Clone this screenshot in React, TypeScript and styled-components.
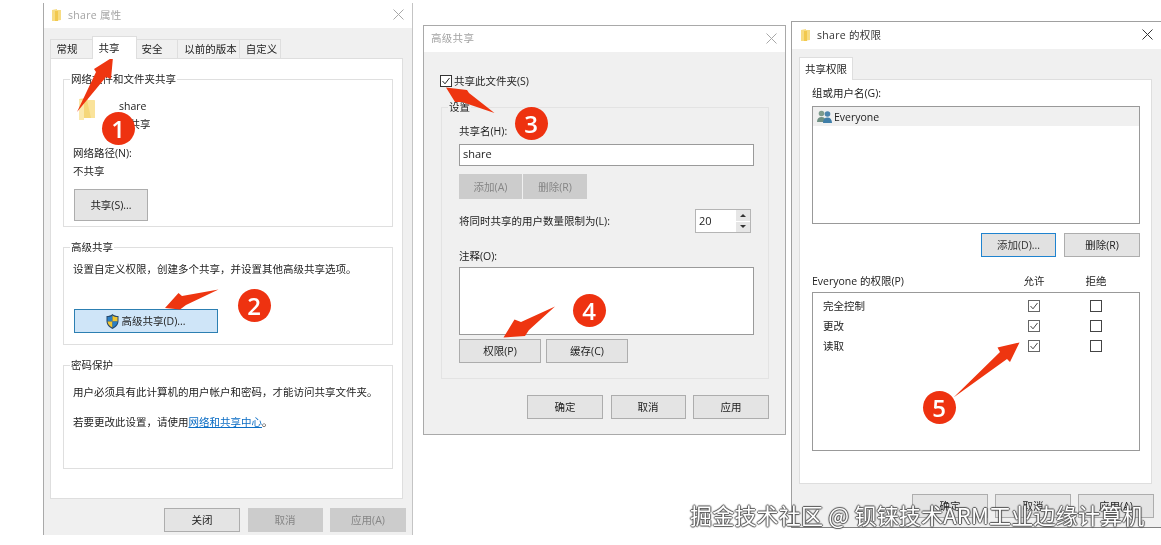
import React from "react";
import styled, { createGlobalStyle } from "styled-components";

const GlobalStyle = createGlobalStyle`
  html, body { margin: 0; padding: 0; background: #fff; overflow: hidden; }
  * { box-sizing: border-box; }
`;

const Desktop = styled.div`
  position: relative;
  width: 1161px;
  height: 545px;
  overflow: hidden;
  background: #fff;
  font-family: "Open Sans", "Noto Sans CJK SC", sans-serif;
  font-size: 10.5px;
  line-height: 18px;
  color: #222;
  filter: blur(0.3px);
`;

const Window = styled.div<{ $x: number; $y: number; $w: number; $h: number; $frame: string }>`
  position: absolute;
  left: ${(p) => p.$x}px;
  top: ${(p) => p.$y}px;
  width: ${(p) => p.$w}px;
  height: ${(p) => p.$h}px;
  display: flex;
  flex-direction: column;
  background: #f0f0f0;
  ${(p) => p.$frame}
`;

const TitleBar = styled.div<{ $h: number; $pad: number; $dim?: boolean }>`
  height: ${(p) => p.$h}px;
  flex: none;
  display: flex;
  align-items: center;
  gap: 7px;
  padding: 0 8px 2px ${(p) => p.$pad}px;
  background: #fff;
  color: ${(p) => (p.$dim ? "#a3a3a3" : "#333")};
  letter-spacing: 0.3px;
`;

const TitleText = styled.span`
  flex: 1;
`;

const Body = styled.div<{ $pad: string }>`
  flex: 1;
  display: flex;
  flex-direction: column;
  padding: ${(p) => p.$pad};
`;

const Tabs = styled.div`
  display: flex;
  align-items: flex-end;
  height: 23px;
  flex: none;
`;

const Tab = styled.div<{ $w: number; $active?: boolean; $pl?: number; $pr?: number }>`
  width: ${(p) => p.$w}px;
  height: ${(p) => (p.$active ? 23 : 20)}px;
  display: flex;
  align-items: center;
  justify-content: center;
  padding: 0 ${(p) => p.$pr ?? 0}px 0 ${(p) => p.$pl ?? 0}px;
  background: ${(p) => (p.$active ? "#fff" : "#f0f0f0")};
  border: 1px solid #dedede;
  border-bottom: ${(p) => (p.$active ? "none" : "1px solid #dedede")};
  position: relative;
  z-index: ${(p) => (p.$active ? 1 : 0)};
  margin-left: -1px;
  white-space: nowrap;
  &:first-child { margin-left: 0; }
`;

const Panel = styled.div<{ $pad: string; $mr: number; $h: number; $gap?: number }>`
  height: ${(p) => p.$h}px;
  flex: none;
  margin-top: -1px;
  margin-right: ${(p) => p.$mr}px;
  padding: ${(p) => p.$pad};
  background: #fff;
  border: 1px solid #dedede;
  display: flex;
  flex-direction: column;
  gap: ${(p) => p.$gap ?? 0}px;
`;

const Group = styled.div<{ $h: number; $pad: string; $tone?: string; $ml?: number }>`
  position: relative;
  height: ${(p) => p.$h}px;
  flex: none;
  margin-left: ${(p) => p.$ml ?? 0}px;
  padding: ${(p) => p.$pad};
  border: 1px solid ${(p) => p.$tone ?? "#dfdfdf"};
`;

const Legend = styled.span<{ $bg?: string }>`
  position: absolute;
  top: -10px;
  left: 6px;
  padding: 0 1px;
  background: ${(p) => p.$bg ?? "#fff"};
`;

const FileRow = styled.div`
  display: flex;
  height: 36px;
  gap: 23px;
  padding-left: 5px;
`;

const Lines = styled.div`
  display: flex;
  flex-direction: column;
`;

const Line = styled.div<{ $mt?: number }>`
  height: 18px;
  flex: none;
  margin-top: ${(p) => p.$mt ?? 0}px;
  white-space: nowrap;
`;

const Link = styled.span`
  color: #0a6cc4;
  text-decoration: underline;
`;

const Button = styled.div<{ $w: number; $h?: number; $mt?: number; $ml?: number; $kind?: "normal" | "disabled" | "focus" | "hot" }>`
  width: ${(p) => p.$w}px;
  height: ${(p) => p.$h ?? 24}px;
  flex: none;
  margin-top: ${(p) => p.$mt ?? 0}px;
  margin-left: ${(p) => p.$ml ?? 0}px;
  display: flex;
  align-items: center;
  justify-content: center;
  gap: 2px;
  white-space: nowrap;
  ${(p) => {
    switch (p.$kind) {
      case "disabled":
        return "background:#cccccc;color:#858585;border:1px solid #cccccc;";
      case "focus":
        return "background:#e1e1e1;color:#333;border:1.5px solid #1f83cf;";
      case "hot":
        return "background:#cfe5f8;color:#222;border:1px solid #2c7fb2;";
      default:
        return "background:#e4e4e4;color:#222;border:1px solid #adadad;";
    }
  }}
`;

const ButtonRow = styled.div<{ $gap: number; $mt: number; $end?: boolean; $w?: number }>`
  display: flex;
  flex: none;
  gap: ${(p) => p.$gap}px;
  margin-top: ${(p) => p.$mt}px;
  justify-content: ${(p) => (p.$end ? "flex-end" : "flex-start")};
  width: ${(p) => (p.$w ? `${p.$w}px` : "auto")};
`;

const CheckRow = styled.div`
  display: flex;
  align-items: center;
  height: 18px;
  flex: none;
  gap: 2px;
  margin-bottom: 17px;
`;

const Field = styled.div<{ $w: number; $h: number; $mt: number }>`
  width: ${(p) => p.$w}px;
  height: ${(p) => p.$h}px;
  flex: none;
  margin-top: ${(p) => p.$mt}px;
  padding: 0 0 2px 3px;
  background: #fff;
  border: 1px solid #9a9a9a;
  display: flex;
  align-items: center;
  font-size: 11px;
`;

const LimitRow = styled.div`
  display: flex;
  align-items: center;
  justify-content: space-between;
  width: 292px;
  height: 24px;
  margin-top: 10px;
`;

const Spinner = styled.div`
  width: 56px;
  height: 24px;
  display: flex;
  background: #fff;
  border: 1px solid #b5b5b5;
`;

const SpinValue = styled.div`
  flex: 1;
  display: flex;
  align-items: center;
  padding-left: 3px;
  font-size: 11px;
`;

const SpinButtons = styled.div`
  width: 14px;
  display: flex;
  flex-direction: column;
  gap: 1px;
`;

const SpinStep = styled.div<{ $up?: boolean }>`
  flex: 1;
  display: flex;
  align-items: center;
  justify-content: center;
  background: #e6e6e6;
  &::after {
    content: "";
    border-left: 3px solid transparent;
    border-right: 3px solid transparent;
    ${(p) => (p.$up ? "border-bottom: 3px solid #333;" : "border-top: 3px solid #333;")}
  }
`;

const ListBox = styled.div<{ $h: number; $mt: number; $pad?: string }>`
  width: 328px;
  height: ${(p) => p.$h}px;
  flex: none;
  margin-top: ${(p) => p.$mt}px;
  padding: ${(p) => p.$pad ?? "0"};
  background: #fff;
  border: 1px solid #999;
`;

const UserRow = styled.div`
  height: 19px;
  display: flex;
  align-items: center;
  gap: 2px;
  padding-left: 4px;
  background: #f0f0f0;
`;

const PermGrid = styled.div<{ $pad: string; $h: number; $mt?: number; $w?: number }>`
  display: grid;
  grid-template-columns: 1fr 62px 62px;
  align-items: center;
  justify-items: start;
  height: ${(p) => p.$h}px;
  margin-top: ${(p) => p.$mt ?? 0}px;
  padding: ${(p) => p.$pad};
  width: ${(p) => (p.$w ? `${p.$w}px` : "100%")};
  flex: none;
`;

const PermHead = styled.span`
  justify-self: center;
  display: flex;
`;

const Watermark = styled.div`
  position: absolute;
  left: 690px;
  top: 499px;
  font-family: "Noto Sans CJK SC", sans-serif;
  font-size: 22px;
  line-height: 30px;
  letter-spacing: 0.2px;
  white-space: nowrap;
  color: #fff;
  text-shadow: 1px 0 1px #555, -1px 0 1px #555, 0 1px 1px #555, 0 -1px 1px #555;
`;

const Badge = styled.div<{ $cx: number; $cy: number }>`
  position: absolute;
  left: ${(p) => p.$cx - 16.5}px;
  top: ${(p) => p.$cy - 16.5}px;
  width: 33px;
  height: 33px;
  border-radius: 50%;
  background: #ee3210;
  color: #fff;
  font-family: "Open Sans", sans-serif;
  font-size: 24px;
  font-weight: 600;
  line-height: 33px;
  text-align: center;
`;

const Overlay = styled.svg`
  position: absolute;
  left: 0;
  top: 0;
  width: 1161px;
  height: 545px;
  pointer-events: none;
`;

const CloseX = ({ c }: { c: string }) => (
  <svg width="11" height="11" viewBox="0 0 11 11">
    <path d="M.5.5l10 10M10.5.5l-10 10" stroke={c} strokeWidth="1" fill="none" />
  </svg>
);

const FolderSmall = () => (
  <svg width="9" height="12" viewBox="0 0 9 12">
    <path d="M0 1l5-1v1h4v10l-6 1H0z" fill="#f7dc83" />
    <path d="M3 2h3v10l-3 0z" fill="#f2c94e" />
  </svg>
);

const FolderBig = () => (
  <svg width="18" height="24" viewBox="0 0 18 24">
    <path d="M1 2l8-1 1 2h6l1 1v17H5L1 23z" fill="#f5d779" />
    <path d="M1 2l5 2v19H1z" fill="#fbe9ad" />
    <path d="M9 3h7l1 1v17h-4z" fill="#fae39a" />
  </svg>
);

const Shield = () => (
  <svg width="13" height="15" viewBox="0 0 13 15">
    <path d="M6.5 0C5 1.4 2.8 2 .5 2v5c0 3.7 2.5 6.4 6 8 3.5-1.6 6-4.300 6-8V2C10.200 2 8 1.400 6.500 0z" fill="#27486b" />
    <path d="M6.500 1.400V7.500H1.500V3c2 0 3.700-.5 5-1.600z" fill="#2b7fc4" />
    <path d="M6.500 1.400c1.300 1.100 3 1.600 5 1.600v4.500h-5z" fill="#f1c52f" />
    <path d="M1.500 7.500h5v6C3.700 12.200 1.700 10.200 1.500 7.500z" fill="#f1c52f" />
    <path d="M6.500 7.500h5c-.2 2.700-2.200 4.700-5 6z" fill="#2b7fc4" />
  </svg>
);

const People = () => (
  <svg width="15" height="14" viewBox="0 0 15 14">
    <circle cx="4.500" cy="3.500" r="2.800" fill="#7f9c8e" />
    <path d="M0 12c0-3.500 1.800-5 4.500-5S9 8.500 9 12z" fill="#6f9083" />
    <circle cx="10.500" cy="4" r="2.800" fill="#4d85ad" />
    <path d="M6 13c0-3.500 1.800-5.500 4.500-5.500S15 9.500 15 13z" fill="#3f7ea8" />
  </svg>
);

const Check = ({ c, s }: { c: string; s: string }) => (
  <svg width="12" height="12" viewBox="0 0 12 12">
    <rect x=".5" y=".5" width="11" height="11" fill="#fff" stroke={s} />
    <path d="M2.500 6l2.500 2.800 4.500-5.800" stroke={c} strokeWidth="1" fill="none" />
  </svg>
);

const Empty = () => (
  <svg width="12" height="12" viewBox="0 0 12 12">
    <rect x=".5" y=".5" width="11" height="11" fill="#fff" stroke="#444" />
  </svg>
);

const perms = ["完全控制", "更改", "读取"];

const arrows = [
  "77,112 96,72 94,69 113,57 111,79 106,77",
  "218.500,289.500 182,296 178.500,293 165,308 180,309.500 186,305",
  "446,87.500 467,90 469,93 494.500,113 462,102 455,102",
  "555,306.500 521,322 514.500,319.500 503.500,337.500 525,336 529,330",
  "953.500,397.500 1000,352 997.500,347.500 1019.500,342.500 1010,362 1007,359",
];

const badges: [number, number, string][] = [
  [118, 128, "1"],
  [254, 305, "2"],
  [531, 123, "3"],
  [589, 310, "4"],
  [939, 407, "5"],
];

export default function App() {
  return (
    <Desktop>
      <GlobalStyle />

      <Window $x={43} $y={3} $w={370} $h={532} $frame="border-left:1px solid #a9a9a9;border-right:1px solid #c4c4c4;">
        <TitleBar $h={25} $pad={8} $dim>
          <FolderSmall />
          <TitleText>share 属性</TitleText>
          <CloseX c="#a8a8a8" />
        </TitleBar>
        <Body $pad="8px 6px 0 6px">
          <Tabs>
            <Tab $w={43} $pr={9}>常规</Tab>
            <Tab $w={45} $pr={11} $active>共享</Tab>
            <Tab $w={42} $pr={10}>安全</Tab>
            <Tab $w={63} $pl={4}>以前的版本</Tab>
            <Tab $w={42} $pl={3}>自定义</Tab>
          </Tabs>
          <Panel $pad="20px 9px 0 12px" $mr={3} $h={441} $gap={20}>
            <Group $h={148} $pad="17px 0 0 9px">
              <Legend>网络文件和文件夹共享</Legend>
              <FileRow>
                <FolderBig />
                <Lines>
                  <Line>share</Line>
                  <Line>不共享</Line>
                </Lines>
              </FileRow>
              <Line $mt={11}>网络路径(N):</Line>
              <Line>不共享</Line>
              <Button $w={74} $h={32} $mt={9} $ml={1}>共享(S)...</Button>
            </Group>
            <Group $h={98} $pad="12px 0 0 9px">
              <Legend>高级共享</Legend>
              <Line>设置自定义权限，创建多个共享，并设置其他高级共享选项。</Line>
              <Button $w={144} $h={24} $mt={31} $ml={1} $kind="hot">
                <Shield />
                高级共享(D)...
              </Button>
            </Group>
            <Group $h={104} $pad="17px 0 0 9px">
              <Legend>密码保护</Legend>
              <Line>用户必须具有此计算机的用户帐户和密码，才能访问共享文件夹。</Line>
              <Line $mt={12}>
                若要更改此设置，请使用<Link>网络和共享中心</Link>。
              </Line>
            </Group>
          </Panel>
          <ButtonRow $gap={7.5} $mt={9} $end>
            <Button $w={76}>关闭</Button>
            <Button $w={75} $kind="disabled">取消</Button>
            <Button $w={76} $kind="disabled">应用(A)</Button>
          </ButtonRow>
        </Body>
      </Window>

      <Window $x={423} $y={25} $w={363} $h={410} $frame="border:1px solid #a9a9a9;">
        <TitleBar $h={26} $pad={7} $dim>
          <TitleText>高级共享</TitleText>
          <CloseX c="#a8a8a8" />
        </TitleBar>
        <Body $pad="20px 16px 0 16px">
          <CheckRow>
            <Check c="#222" s="#333" />
            共享此文件夹(S)
          </CheckRow>
          <Group $h={272} $pad="14px 0 0 17px" $tone="#e3e3e3" $ml={1}>
            <Legend $bg="#f0f0f0">设置</Legend>
            <Line>共享名(H):</Line>
            <Field $w={295} $h={22} $mt={4}>share</Field>
            <ButtonRow $gap={1} $mt={8}>
              <Button $w={63} $h={25} $kind="disabled">添加(A)</Button>
              <Button $w={64} $h={25} $kind="disabled">删除(R)</Button>
            </ButtonRow>
            <LimitRow>
              <span>将同时共享的用户数量限制为(L):</span>
              <Spinner>
                <SpinValue>20</SpinValue>
                <SpinButtons>
                  <SpinStep $up />
                  <SpinStep />
                </SpinButtons>
              </Spinner>
            </LimitRow>
            <Line $mt={14}>注释(O):</Line>
            <Field $w={295} $h={68} $mt={2} />
            <ButtonRow $gap={5} $mt={4}>
              <Button $w={82}>权限(P)</Button>
              <Button $w={82}>缓存(C)</Button>
            </ButtonRow>
          </Group>
          <ButtonRow $gap={7.5} $mt={16} $end>
            <Button $w={76}>确定</Button>
            <Button $w={75}>取消</Button>
            <Button $w={76}>应用</Button>
          </ButtonRow>
        </Body>
      </Window>

      <Window $x={791} $y={21} $w={370} $h={507} $frame="border-top:1px solid #a0a0a0;border-left:1px solid #a0a0a0;border-bottom:1px solid #808080;">
        <TitleBar $h={27} $pad={9}>
          <FolderSmall />
          <TitleText>share 的权限</TitleText>
          <CloseX c="#333" />
        </TitleBar>
        <Body $pad="8px 7px 0 7px">
          <Tabs>
            <Tab $w={54} $active>共享权限</Tab>
          </Tabs>
          <Panel $pad="4px 0 0 12px" $mr={2} $h={405}>
            <Line>组或用户名(G):</Line>
            <ListBox $h={118} $mt={4}>
              <UserRow>
                <People />
                Everyone
              </UserRow>
            </ListBox>
            <ButtonRow $gap={8} $mt={9} $end $w={328}>
              <Button $w={75} $kind="focus">添加(D)...</Button>
              <Button $w={76}>删除(R)</Button>
            </ButtonRow>
            <PermGrid $pad="0 13px 0 0" $h={18} $mt={15} $w={328}>
              <span>Everyone 的权限(P)</span>
              <PermHead>允许</PermHead>
              <PermHead>拒绝</PermHead>
            </PermGrid>
            <ListBox $h={159} $mt={2} $pad="3px 0 0 0">
              {perms.map((name) => (
                <PermGrid key={name} $pad="0 12px 0 10px" $h={20}>
                  <span>{name}</span>
                  <PermHead>
                    <Check c="#444" s="#666" />
                  </PermHead>
                  <PermHead>
                    <Empty />
                  </PermHead>
                </PermGrid>
              ))}
            </ListBox>
          </Panel>
          <ButtonRow $gap={7} $mt={10} $end>
            <Button $w={76}>确定</Button>
            <Button $w={76}>取消</Button>
            <Button $w={76}>应用(A)</Button>
          </ButtonRow>
        </Body>
      </Window>

      <Overlay viewBox="0 0 1161 545">
        {arrows.map((pts) => (
          <polygon key={pts} points={pts} fill="#ee3510" />
        ))}
      </Overlay>
      {badges.map(([x, y, n]) => (
        <Badge key={n} $cx={x} $cy={y}>{n}</Badge>
      ))}
      <Watermark>掘金技术社区 @ 钡铼技术ARM工业边缘计算机</Watermark>
    </Desktop>
  );
}
